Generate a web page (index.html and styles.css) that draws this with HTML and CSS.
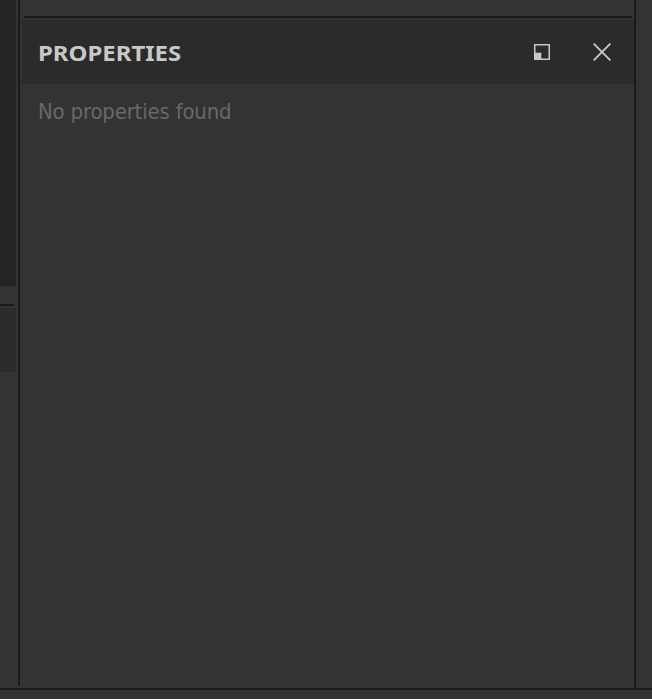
FILE: index.html
```
<!DOCTYPE html>
<html lang="en">
<head>
<meta charset="utf-8">
<title>Properties</title>
<link rel="stylesheet" href="styles.css">
</head>
<body>
<div class="workspace">
  <aside class="left-dock">
    <div class="dock-view"></div>
    <div class="dock-divider"></div>
    <div class="dock-header"></div>
  </aside>
  <div class="splitter"></div>
  <main class="panel">
    <div class="panel-divider"></div>
    <header class="panel-header">
      <h1 class="panel-title">PROPERTIES</h1>
      <button class="icon-button" aria-label="Restore">
        <svg width="16" height="16" viewBox="0 0 16 16"><path d="M.75.75h14.5v14.5H.75z" fill="none" stroke="#c8c8c8" stroke-width="1.5"/><path d="M1 8.7h6.3V15H1z" fill="#c8c8c8"/></svg>
      </button>
      <button class="icon-button close" aria-label="Close">
        <svg width="18" height="18" viewBox="0 0 18 18"><path d="M.7.7l16.6 16.6M17.3.7L.7 17.3" fill="none" stroke="#c8c8c8" stroke-width="1.9"/></svg>
      </button>
    </header>
    <p class="empty-message">No properties found</p>
  </main>
  <div class="right-edge"></div>
</div>
<div class="status-bar"></div>
</body>
</html>
```
FILE: styles.css
```
* { box-sizing: border-box; }
body {
  margin: 0;
  height: 699px;
  overflow: hidden;
  background: #333;
  color: #c8c8c8;
  font-family: Tahoma, "Noto Sans", sans-serif;
}
.workspace { display: flex; height: 688px; }
.left-dock { width: 18px; }
.dock-view { width: 16px; height: 286px; background: #242424; }
.dock-divider { width: 14px; height: 2px; margin: 18px 0 2px; background: #1a1a1a; }
.dock-header { width: 16px; height: 64px; background: #2b2b2b; }
.splitter { width: 2px; height: 686px; background: #1a1a1a; }
.panel { width: 614px; padding: 16px 0 0 2px; }
.panel-divider { height: 2px; margin: 0 2px; background: #1a1a1a; }
.panel-header {
  display: flex;
  align-items: center;
  height: 64px;
  margin-top: 2px;
  padding: 0 23px 0 16px;
  background: #2b2b2b;
}
.panel-title {
  margin: 0 auto 0 0;
  font-size: 22px;
  line-height: 30px;
  font-weight: 700;
  transform: scaleX(1.088);
  transform-origin: left;
}
.icon-button {
  display: flex;
  padding: 0;
  border: 0;
  background: none;
}
.close { margin-left: 43px; }
.empty-message {
  margin: 13px 0 0 16px;
  color: #686868;
  font-family: Tahoma, "DejaVu Sans Condensed", "DejaVu Sans", sans-serif;
  font-stretch: condensed;
  font-size: 22px;
  line-height: 30px;
  letter-spacing: -0.2px;
}
.right-edge { width: 18px; border-left: 2px solid #1a1a1a; }
.status-bar { height: 11px; border-top: 2px solid #1a1a1a; }
```
